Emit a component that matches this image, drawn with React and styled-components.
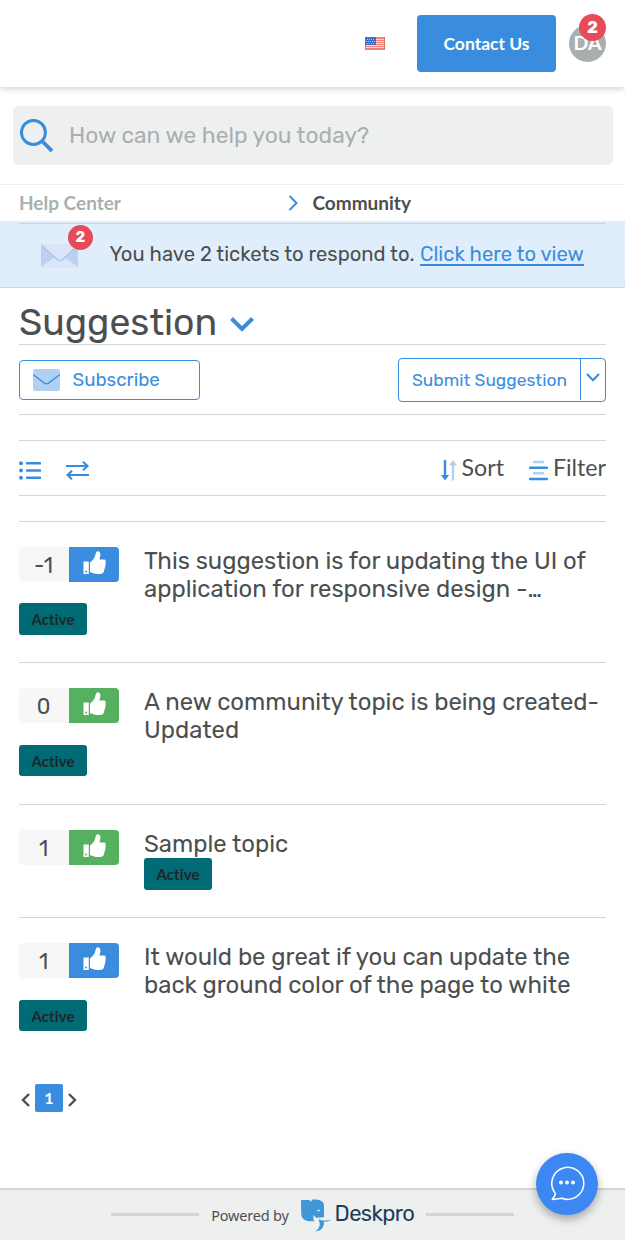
import React from "react";
import styled, { createGlobalStyle } from "styled-components";

const blue = "#3a8dde";
const ink = "#4c4f50";
const line = "#d3d6d6";
const body = `"Rubik", "Roboto", "Liberation Sans", sans-serif`;
const lato = `"Lato", "Liberation Sans", sans-serif`;

const Global = createGlobalStyle`
  *, *::before, *::after { box-sizing: border-box; }
  body { margin: 0; background: #fff; color: ${ink}; font-family: ${body}; }
  svg { display: block; flex: none; }
`;

const Page = styled.div`
  display: flex;
  flex-direction: column;
  width: 625px;
  height: 1240px;
  overflow: hidden;
`;

const Header = styled.header`
  display: flex;
  justify-content: flex-end;
  align-items: center;
  flex: none;
  height: 87px;
  padding-right: 19px;
  box-shadow: 0 2px 6px rgba(0, 0, 0, 0.18);
`;

const ContactButton = styled.button`
  width: 139px;
  height: 57px;
  margin: 0 13px 0 32px;
  border: 0;
  border-radius: 4px;
  background: ${blue};
  color: #fff;
  font: 700 17.5px/57px ${lato};
  padding: 0;
`;

const Avatar = styled.div`
  position: relative;
  width: 37px;
  height: 37px;
  border-radius: 50%;
  background: #a9afae;
  color: #fff;
  font: 700 19.5px/36px ${lato};
  text-align: center;
`;

const Count = styled.span`
  position: absolute;
  top: ${(p) => p.$top}px;
  right: ${(p) => p.$right}px;
  width: ${(p) => p.$size}px;
  height: ${(p) => p.$size}px;
  border-radius: 50%;
  background: #e84a57;
  color: #fff;
  font: 700 ${(p) => p.$font}px/${(p) => p.$size}px ${body};
  text-align: center;
`;

const SearchBox = styled.div`
  display: flex;
  align-items: center;
  flex: none;
  gap: 16px;
  height: 59px;
  margin: 19px 12px 19px 13px;
  padding-left: 7px;
  border-radius: 5px;
  background: #eef0f0;
  color: #a9afae;
  font-size: 22.8px;
`;

const Breadcrumb = styled.nav`
  display: flex;
  align-items: center;
  flex: none;
  height: 37px;
  padding: 0 19px;
  border-top: 1px solid #eef0f0;
  font: 700 19px/36px ${lato};
`;

const Crumb = styled.span`
  width: ${(p) => p.$width || "auto"};
  margin-left: ${(p) => p.$gap || 0}px;
  color: ${(p) => (p.$muted ? "#a9afae" : ink)};
`;

const Alert = styled.section`
  flex: none;
  height: 67px;
  padding: 2px 19px 0;
  background: #e0eefb;
  border-bottom: 1px solid #cfd6db;
`;

const AlertRow = styled.div`
  display: flex;
  align-items: center;
  height: 64px;
  padding: 0 0 2px 22px;
  border-top: 1px solid #cbd2d8;
  font-size: 20.22px;
  white-space: nowrap;
`;

const MailBadge = styled.span`
  position: relative;
  margin: 2px 31.5px 0 0;
`;

const AlertText = styled.span`
  margin-bottom: 2px;
  line-height: 22px;
`;

const AlertLink = styled.a`
  margin: 0 0 2px 5.5px;
  color: ${blue};
  line-height: 22px;
  box-shadow: 0 1px 0 ${blue}, inset 0 -1px 0 ${blue};
`;

const Main = styled.main`
  display: flex;
  flex-direction: column;
  flex: none;
  height: 900px;
  padding: 0 19px;
`;

const TitleBar = styled.div`
  display: flex;
  align-items: center;
  gap: 12.5px;
  height: 57px;
  padding-top: 13px;
  border-bottom: 1px solid ${line};
`;

const Title = styled.h1`
  margin: -2px 0 0;
  font-size: 37.4px;
  font-weight: 400;
  line-height: 44px;
`;

const TitleChevron = styled.span`
  padding-top: 4px;
`;

const Actions = styled.div`
  display: flex;
  justify-content: space-between;
  align-items: center;
  height: 70px;
  border-bottom: 1px solid ${line};
`;

const Subscribe = styled.button`
  display: flex;
  align-items: center;
  gap: 12.5px;
  width: 181px;
  height: 40px;
  padding: 0 13px;
  border: 1px solid ${blue};
  border-radius: 4px;
  background: #fff;
  color: ${blue};
  font: 400 18.75px/38px ${body};
`;

const Submit = styled.div`
  display: flex;
  width: 208px;
  height: 44px;
  border: 1px solid ${blue};
  border-radius: 4px;
  color: ${blue};
  font-size: 17.45px;
  line-height: 43px;
`;

const SubmitLabel = styled.span`
  width: 182px;
  height: 41px;
  padding-left: 13px;
  border-right: 1px solid ${blue};
  white-space: nowrap;
`;

const SubmitToggle = styled.span`
  padding: 14px 0 0 5px;
`;

const Toolbar = styled.div`
  display: flex;
  align-items: center;
  height: 56px;
  margin: 25px 0 24.9px;
  padding-top: 4px;
  border-top: 1px solid ${line};
  border-bottom: 1px solid ${line};
`;

const ViewIcons = styled.div`
  display: flex;
  align-items: center;
  gap: 25px;
  flex: 1;
`;

const Tool = styled.div`
  display: flex;
  align-items: center;
  gap: 4.5px;
  margin-left: 25.5px;
  font: 400 23.2px/28px ${lato};
`;

const ToolLabel = styled.span`
  padding-bottom: 6px;
`;

const Topic = styled.article`
  display: grid;
  grid-template-columns: 125px 1fr;
  flex: none;
  padding: 25px 0 27.8px;
  border-top: 1px solid ${line};
`;

const Vote = styled.div`
  display: flex;
  width: 100px;
  height: 35px;
  margin-bottom: -7px;
  border-radius: 4px;
  overflow: hidden;
`;

const VoteCount = styled.span`
  width: 50px;
  padding-right: 1px;
  background: #f7f7f7;
  font-size: 21.5px;
  line-height: 37px;
  text-align: center;
`;

const VoteButton = styled.span`
  display: flex;
  justify-content: center;
  width: 50px;
  padding-top: 4px;
  background: ${(p) => (p.$voted ? "#55b160" : blue)};
`;

const TopicTitle = styled.h2`
  margin: 0 -10px 0 0;
  font-size: 23.88px;
  font-weight: 400;
  line-height: 28px;
  white-space: nowrap;
`;

const TitleLine = styled.span`
  display: block;
`;

const Ellipsis = styled.span`
  letter-spacing: -1.8px;
`;

const Status = styled.span`
  grid-column: ${(p) => (p.$inline ? 2 : 1)};
  width: 68px;
  height: 31.5px;
  margin-top: 0.2px;
  border-radius: 3px;
  background: #006b74;
  color: #212529;
  font: 700 15px/33px ${lato};
  letter-spacing: 0.1px;
  text-align: center;
`;

const Pager = styled.div`
  display: flex;
  align-items: center;
  gap: 5px;
  height: 28px;
  margin: 25px 0 0 2px;
`;

const PagerArrow = styled.span`
  padding-top: 4px;
`;

const PageNumber = styled.span`
  width: 28px;
  height: 28px;
  border-radius: 2px;
  background: ${blue};
  color: #fff;
  font: 700 16px/28px ${lato};
  text-align: center;
`;

const Footer = styled.footer`
  position: relative;
  display: flex;
  justify-content: center;
  align-items: center;
  flex: none;
  height: 52px;
  border-top: 2px solid #d2d5d4;
  background: #eef0f0;
`;

const Rule = styled.span`
  width: 88px;
  height: 3px;
  margin-bottom: 1px;
  background: #d2d5d4;
`;

const Powered = styled.span`
  margin: 0 12px 0 12.5px;
  color: ${ink};
  font: 400 14.5px/20px "Noto Sans", sans-serif;
  letter-spacing: -0.2px;
`;

const Brand = styled.span`
  margin: 0 12px 2px 4px;
  color: #1c3e57;
  font: 400 22px/28px ${body};
  letter-spacing: -0.6px;
`;

const Chat = styled.button`
  position: absolute;
  top: -37px;
  right: 27px;
  display: flex;
  justify-content: center;
  align-items: center;
  width: 62px;
  height: 62px;
  padding: 0 1px 2px 0;
  border: 0;
  border-radius: 50%;
  background: #3d87f2;
  box-shadow: 0 4px 10px rgba(0, 0, 0, 0.32);
`;

const Flag = () => (
  <svg width="20" height="13" viewBox="0 0 20 13">
    <rect width="20" height="13" fill="#fbd9d2" />
    {[1, 3, 5, 7, 9, 11].map((y) => (
      <rect key={y} y={y} width="20" height="1" fill="#f27e74" />
    ))}
    <rect width="11" height="8" fill="#3a6cc8" />
    <path d="M2 2.500h8M1 4.500h9M2 6.500h8" stroke="#a9c4f2" strokeDasharray="1 1" />
    <rect x=".5" y=".5" width="19" height="12" fill="none" stroke="#a8643f" opacity=".6" />
  </svg>
);

const SearchIcon = () => (
  <svg width="33" height="33" viewBox="0 0 33 33" fill="none" stroke={blue} strokeWidth="3">
    <circle cx="13.4" cy="13.4" r="12" />
    <path d="M22 22l10 10" strokeWidth="3.8" />
  </svg>
);

const Chevron = ({ w, h, d, sw, color = blue }) => (
  <svg width={w} height={h} viewBox={`0 0 ${w} ${h}`} fill="none" stroke={color} strokeWidth={sw}>
    <path d={d} />
  </svg>
);

const AlertMail = () => (
  <svg width="37" height="24" viewBox="0 0 37 24">
    <rect width="37" height="24" fill="#dbe5f7" />
    <path d="M0 1l14 12.300L0 22.500zM37 1L23 13.300l14 9.200z" fill="#bad1f2" />
    <path d="M0 1l17 15q2 1.5 4 0L37 1" fill="none" stroke="#a7c4ee" strokeWidth="1.2" />
  </svg>
);

const SubscribeMail = () => (
  <svg width="27" height="22" viewBox="0 0 27 22">
    <rect width="27" height="22" rx="2" fill="#b0d1f2" />
    <path d="M0 5.5l11.5 8.6q2 1.4 4 0L27 5.5" fill="none" stroke={blue} strokeWidth="1.3" />
  </svg>
);

const ListIcon = () => (
  <svg width="22" height="19" viewBox="0 0 22 19" fill={blue}>
    {[2.3, 9.5, 16.7].map((y) => (
      <g key={y}>
        <circle cx="2" cy={y} r="2" />
        <rect x="7" y={y - 1.2} width="15" height="2.4" rx=".5" />
      </g>
    ))}
  </svg>
);

const SwapIcon = () => (
  <svg width="23" height="19" viewBox="0 0 23 19" fill="none" stroke={blue} strokeWidth="2.2">
    <path d="M0 5h21M17 .8L21.500 5 17 9.300M23 14H2M6 9.700L1.500 14 6 18.200" />
  </svg>
);

const SortIcon = () => (
  <svg width="16" height="21" viewBox="0 0 16 21">
    <path d="M2.800 0h2.400v15h3l-4.200 5.500L0 15h2.800z" fill={blue} />
    <path d="M10.800 20.500h2.400V5.500h2.800L12 0 8 5.500h2.800z" fill="#b0d1f2" />
  </svg>
);

const FilterIcon = () => (
  <svg width="19" height="21" viewBox="0 0 19 21">
    <path d="M5 2h9M5 13.200h9" stroke="#b0d1f2" strokeWidth="2.500" strokeLinecap="round" />
    <path d="M1 7.700h17M1 19h17" stroke={blue} strokeWidth="2.500" strokeLinecap="round" />
  </svg>
);

const ThumbIcon = ({ hole }) => (
  <svg width="23" height="24" viewBox="0 0 23 24" fill="#fff">
    <path d="M.5 10.500h5.300V23H.5z" />
    <path d="M7 11.500c2-1.500 4.200-3.800 5-6.200C12.500 3.500 12.800.3 14.600.2c2 0 3 1.700 2.800 3.800-.1 1.800-.8 3-1 4.500h4.800c1.500 0 1.700 1.300 1.300 2.200.5.900.4 2-.2 2.800.4 1 .2 2-.5 2.800.3 1-.1 2-.7 2.700.2 1.400-.7 3.500-2.600 3.800-3.500.600-7 .200-9.500-1-.8-.4-2-.500-2-.5z" />
    <circle cx="3" cy="20.500" r="1" fill={hole} />
  </svg>
);

const Elephant = () => (
  <svg width="30" height="33" viewBox="0 0 30 33">
    <path
      d="M0 1h8.600l1.200 2L11.200.6C16 .4 23 .500 23 7v11.200l-3.500.3-4.500.2-2.400-2-.2 3.500 1 2H8C3.500 22 .5 19 .2 15z"
      fill="#3f97d8"
    />
    <path
      d="M17.500 20.200c3 1.600 8 1.600 12.500.600-1.500 1.400-4 2-7.200 1.900.6 5-2.300 9.800-9 9.500 3.500-1.500 5.300-4.600 4.900-8.300z"
      fill="#3f97d8"
    />
    <path d="M15 12l3-1.400 1.300 1.600z" fill="#eef0f0" />
    <path d="M12.500 16.500l3 4 1 2" fill="none" stroke="#eef0f0" />
  </svg>
);

const ChatIcon = () => (
  <svg width="36" height="36" viewBox="0 0 36 36">
    <path
      d="M6.500 28.500A16 16 0 1 1 13 33.200L3.300 34.500C5 32.500 6 30.500 6.500 28.500z"
      fill="none"
      stroke="#fff"
      strokeWidth="1.500"
      strokeLinejoin="round"
    />
    <g fill="#fff">
      <circle cx="12" cy="17.500" r="2" />
      <circle cx="18" cy="17.500" r="2" />
      <circle cx="24" cy="17.500" r="2" />
    </g>
  </svg>
);

const topics = [
  {
    votes: "-1",
    lines: ["This suggestion is for updating the UI of", "application for responsive design -"],
    truncated: true,
  },
  { votes: "0", voted: true, lines: ["A new community topic is being created-", "Updated"] },
  { votes: "1", voted: true, inline: true, lines: ["Sample topic"] },
  {
    votes: "1",
    lines: ["It would be great if you can update the", "back ground color of the page to white"],
  },
];

export default function App() {
  return (
    <Page>
      <Global />
      <Header>
        <Flag />
        <ContactButton>Contact Us</ContactButton>
        <Avatar>
          DA
          <Count $top={-11} $right={0} $size={27} $font={17}>2</Count>
        </Avatar>
      </Header>
      <SearchBox>
        <SearchIcon />
        <span>How can we help you today?</span>
      </SearchBox>
      <Breadcrumb>
        <Crumb $muted $width="269px">Help Center</Crumb>
        <Chevron w={11} h={16} sw={2} d="M1.500 1l7 7-7 7" />
        <Crumb $gap={13.5}>Community</Crumb>
      </Breadcrumb>
      <Alert>
        <AlertRow>
          <MailBadge>
            <AlertMail />
            <Count $top={-19} $right={-15} $size={25} $font={15}>2</Count>
          </MailBadge>
          <AlertText>You have 2 tickets to respond to.</AlertText>
          <AlertLink>Click here to view</AlertLink>
        </AlertRow>
      </Alert>
      <Main>
        <TitleBar>
          <Title>Suggestion</Title>
          <TitleChevron>
            <Chevron w={24} h={15} sw={4} d="M1.500 1.500l10.500 10.500L22.500 1.500" />
          </TitleChevron>
        </TitleBar>
        <Actions>
          <Subscribe>
            <SubscribeMail />
            Subscribe
          </Subscribe>
          <Submit>
            <SubmitLabel>Submit Suggestion</SubmitLabel>
            <SubmitToggle>
              <Chevron w={14} h={10} sw={2.2} d="M1 1l6 6.200L13 1" />
            </SubmitToggle>
          </Submit>
        </Actions>
        <Toolbar>
          <ViewIcons>
            <ListIcon />
            <SwapIcon />
          </ViewIcons>
          <Tool>
            <SortIcon />
            <ToolLabel>Sort</ToolLabel>
          </Tool>
          <Tool>
            <FilterIcon />
            <ToolLabel>Filter</ToolLabel>
          </Tool>
        </Toolbar>
        {topics.map((t) => (
          <Topic key={t.lines[0]}>
            <Vote>
              <VoteCount>{t.votes}</VoteCount>
              <VoteButton $voted={t.voted}>
                <ThumbIcon hole={t.voted ? "#55b160" : blue} />
              </VoteButton>
            </Vote>
            <TopicTitle>
              {t.lines.map((text, i) => (
                <TitleLine key={text}>
                  {text}
                  {t.truncated && i === t.lines.length - 1 && <Ellipsis>...</Ellipsis>}
                </TitleLine>
              ))}
            </TopicTitle>
            <Status $inline={t.inline}>Active</Status>
          </Topic>
        ))}
        <Pager>
          <PagerArrow>
            <Chevron w={9} h={14} sw={2.4} color={ink} d="M8 1L2 7l6 6" />
          </PagerArrow>
          <PageNumber>1</PageNumber>
          <PagerArrow>
            <Chevron w={9} h={14} sw={2.4} color={ink} d="M1 1l6 6-6 6" />
          </PagerArrow>
        </Pager>
      </Main>
      <Footer>
        <Rule />
        <Powered>Powered by</Powered>
        <Elephant />
        <Brand>Deskpro</Brand>
        <Rule />
        <Chat aria-label="Open chat">
          <ChatIcon />
        </Chat>
      </Footer>
    </Page>
  );
}
